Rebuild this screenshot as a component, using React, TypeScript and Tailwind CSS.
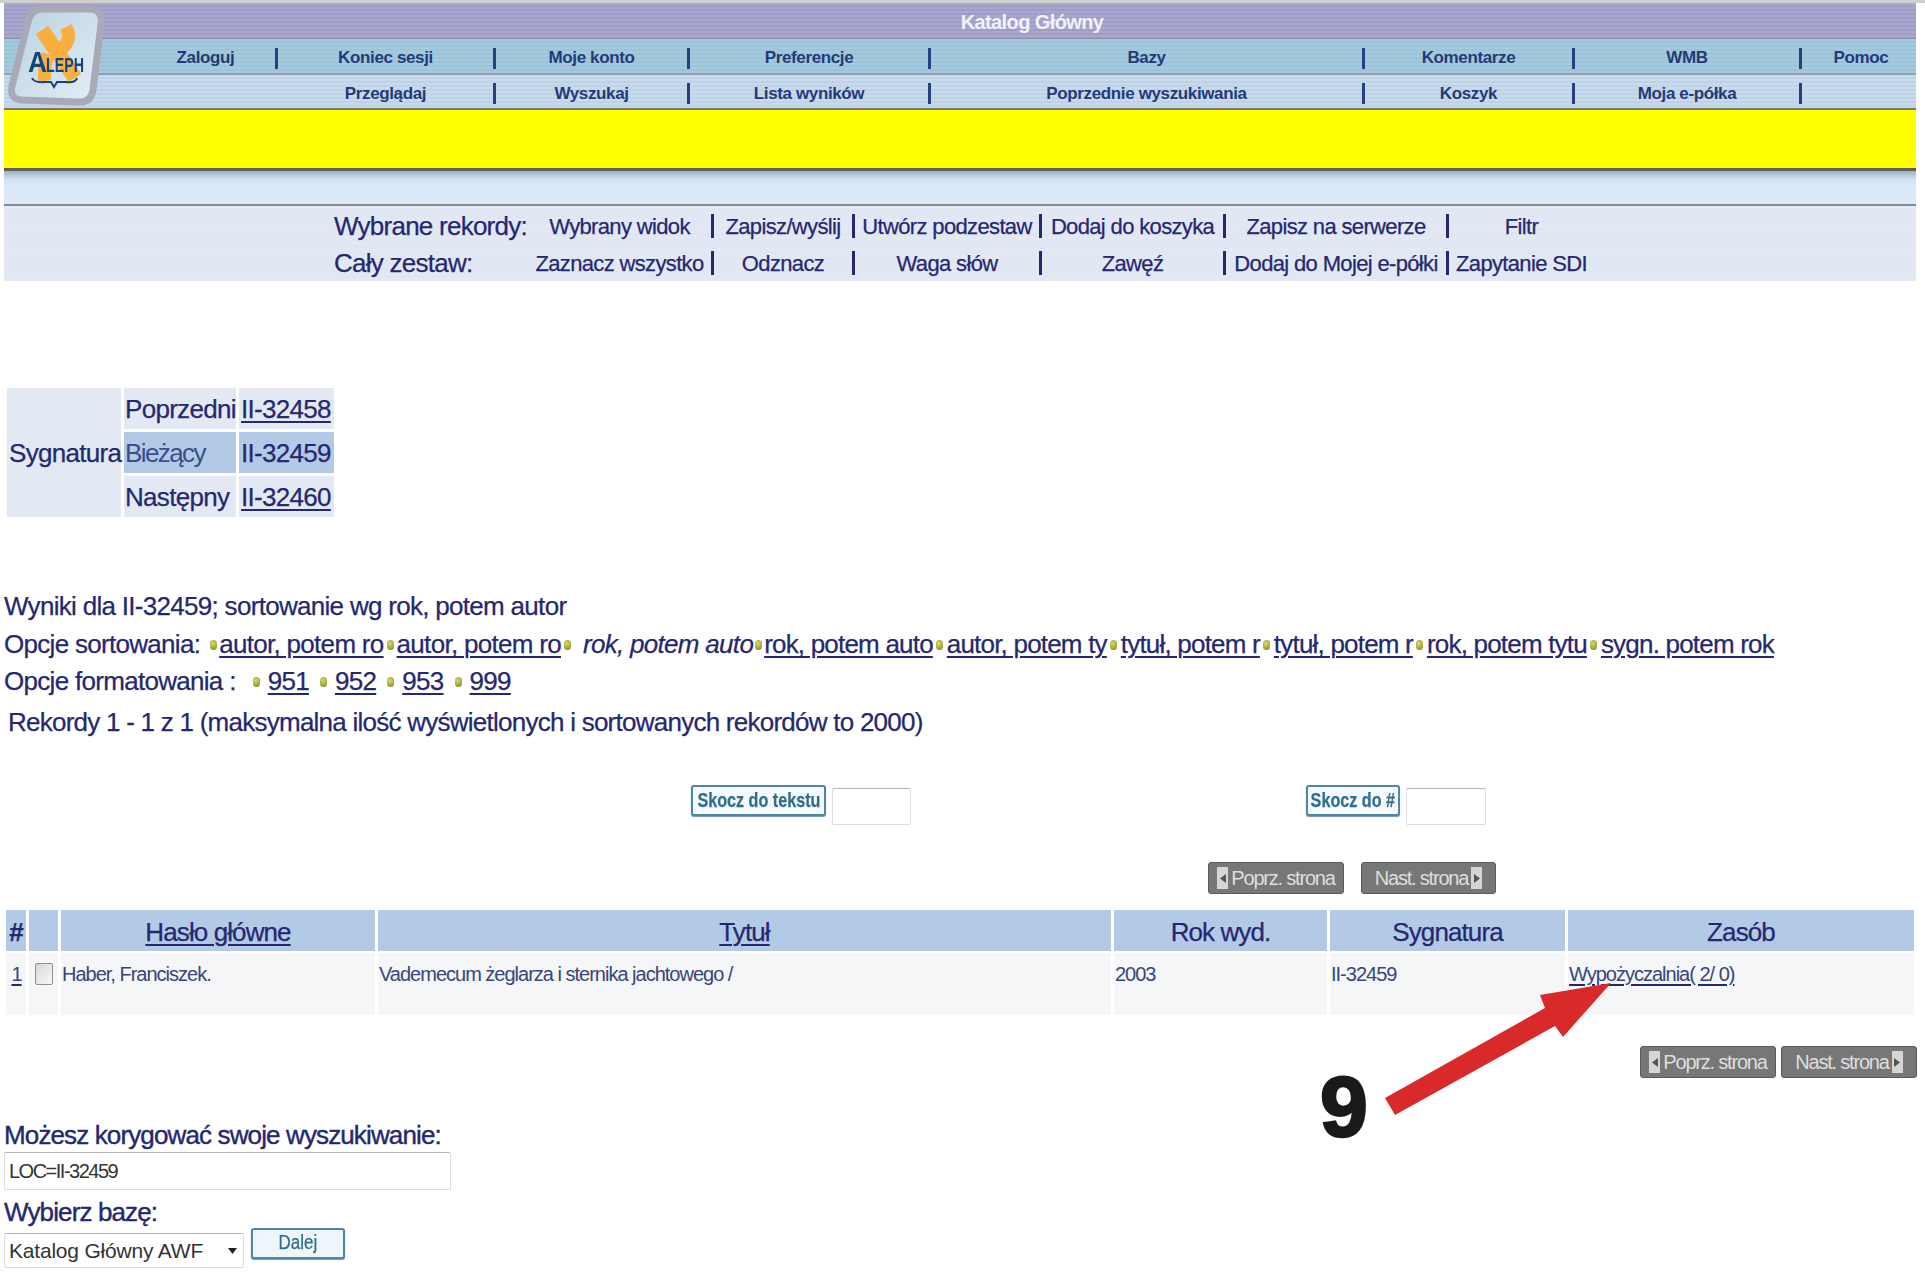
const navTop = ["Zaloguj", "Koniec sesji", "Moje konto", "Preferencje", "Bazy", "Komentarze", "WMB"]
const navBottom = ["", "Przeglądaj", "Wyszukaj", "Lista wyników", "Poprzednie wyszukiwania", "Koszyk", "Moja e-półka"]
const selected = ["Wybrany widok", "Zapisz/wyślij", "Utwórz podzestaw", "Dodaj do koszyka", "Zapisz na serwerze", "Filtr"]
const whole = ["Zaznacz wszystko", "Odznacz", "Waga słów", "Zawęź", "Dodaj do Mojej e-półki", "Zapytanie SDI"]
const sortLinks = ["autor, potem ro", "autor, potem ro"]
const sortLinksAfter = ["rok, potem auto", "autor, potem ty", "tytuł, potem r", "tytuł, potem r", "rok, potem tytu", "sygn. potem rok"]

function Logo() {
  return (
    <svg width="115" height="112" viewBox="0 0 115 112" className="absolute top-0 left-0 blur-[0.5px]">
      <defs>
        <linearGradient id="logoFill" x1="0" y1="0" x2="1" y2="1">
          <stop offset="0" stopColor="#b6d2e2" />
          <stop offset="1" stopColor="#e6eef4" />
        </linearGradient>
      </defs>
      <path
        d="M42 9 L90 9 Q103 10 101 24 L93 90 Q91 103 78 102 L22 100 Q9 99 12 86 L28 22 Q31 9 42 9 Z"
        fill="url(#logoFill)"
        stroke="#a9a9b8"
        strokeWidth="7"
      />
      <g fill="none" stroke="#f9ae40">
        <path d="M42 30 L75 78" strokeWidth="15" />
        <path d="M66 27 Q74 42 57 52" strokeWidth="13" />
        <path d="M48 54 Q43 70 45 81" strokeWidth="13" />
      </g>
      <text x="28" y="72" fontFamily="'Liberation Sans', sans-serif" fontSize="30" fontWeight="700" fill="#16457c" textLength="19" lengthAdjust="spacingAndGlyphs">A</text>
      <text x="46" y="72" fontFamily="'Liberation Sans', sans-serif" fontSize="20" fontWeight="700" fill="#16457c" textLength="38" lengthAdjust="spacingAndGlyphs">LEPH</text>
      <path d="M32 78 Q34 83 45 82 L51 82 L54 87 L57 82 L66 82 Q76 83 77 78" fill="none" stroke="#16457c" strokeWidth="2" />
    </svg>
  )
}

function NavCell({ label, last }: { label: string; last?: boolean }) {
  return (
    <div className={`flex items-center ${last ? "pl-[4px]" : ""}`}>
      <span className="flex-1 text-center text-[17px] font-bold tracking-[-0.37px] whitespace-nowrap text-[#243a78] [-webkit-text-stroke:0]">{label}</span>
      {!last && <span className="h-[21px] w-[3px] bg-[#25407f]" />}
    </div>
  )
}

function ToolCell({ label, sep = true }: { label: string; sep?: boolean }) {
  return (
    <div className="flex items-center">
      <span className="flex-1 text-center text-[22px] tracking-[-0.65px] whitespace-nowrap text-[#25286f]">{label}</span>
      {sep && <span className="h-[24px] w-[3px] bg-[#25286f]" />}
    </div>
  )
}

function Bullet() {
  return <span className="inline-block h-[10px] w-[7px] rounded-full bg-[radial-gradient(circle_at_40%_35%,#d6da6c,#7f8416)]" />
}

function TextLink({ children, className = "" }: { children: React.ReactNode; className?: string }) {
  return <a className={`underline decoration-[#25286f] decoration-[1.5px] underline-offset-[3px] ${className}`}>{children}</a>
}

function JumpButton({ label, width }: { label: string; width: string }) {
  return (
    <button className={`flex h-[31px] items-center justify-center rounded-[3px] border-2 border-[#4f87a3] bg-[#f3f9fd] pb-[2px] text-[21px] font-bold whitespace-nowrap text-[#326d8b] shadow-[0_1px_1px_#6f98ac] ${width}`}>
      <span className="inline-block scale-x-[0.77]">{label}</span>
    </button>
  )
}

function PageButton({ label, dir, width }: { label: string; dir: "prev" | "next"; width: string }) {
  const arrow = (
    <span className="flex h-[22px] w-[11px] shrink-0 items-center justify-center bg-[#d5d5d5]">
      <svg width="6" height="9" viewBox="0 0 6 9">
        <path d={dir === "prev" ? "M6 0 L0 4.5 L6 9 Z" : "M0 0 L6 4.5 L0 9 Z"} fill="#555" />
      </svg>
    </span>
  )
  return (
    <div className={`flex h-[32px] items-center justify-center gap-[3px] rounded-[3px] border border-[#5a5a5a] bg-[#777777] text-[20px] tracking-[-1.2px] whitespace-nowrap text-[#dedede] [-webkit-text-stroke:0] ${width}`}>
      {dir === "prev" && arrow}
      {label}
      {dir === "next" && arrow}
    </div>
  )
}

function SignatureTable() {
  const labelCell = "flex items-center bg-[#e2e9f3] pt-[2px]"
  return (
    <div className="ml-[3px] grid w-[327px] grid-cols-[114px_112px_95px] grid-rows-[41px_41px_41px] gap-x-[3px] gap-y-[3px] text-[26px] tracking-[-0.7px] text-[#25286f]">
      <div className={`${labelCell} row-span-3 pl-[2px] whitespace-nowrap`}>Sygnatura</div>
      <div className={`${labelCell} pl-[1px] whitespace-nowrap`}>Poprzedni</div>
      <div className={`${labelCell} pl-[2px]`}><TextLink>II-32458</TextLink></div>
      <div className="flex items-center bg-[#b3cae7] pt-[2px] pl-[1px] tracking-[-1.6px] text-[#3a4f8a] [-webkit-text-stroke:0]">Bieżący</div>
      <div className="flex items-center bg-[#b3cae7] pt-[2px] pl-[2px]">II-32459</div>
      <div className={`${labelCell} pl-[1px] whitespace-nowrap`}>Następny</div>
      <div className={`${labelCell} pl-[2px]`}><TextLink>II-32460</TextLink></div>
    </div>
  )
}

function ResultsTable() {
  const head = "flex items-center justify-center bg-[#b3cae7] pt-[3px] text-[26px] tracking-[-0.9px] text-[#25286f]"
  const cell = "bg-[#f4f6f8] pt-[9px] pl-[1px] text-[20px] leading-[24px] tracking-[-1px] text-[#3a4578] [-webkit-text-stroke:0]"
  return (
    <div className="mt-[16px] ml-[6px] grid w-[1908px] grid-cols-[20px_29px_314px_733px_213px_235px_346px] grid-rows-[41px_62px] gap-x-[3px] gap-y-[2px]">
      <div className={`${head} font-bold`}>#</div>
      <div className={head} />
      <div className={head}><TextLink>Hasło główne</TextLink></div>
      <div className={head}><TextLink>Tytuł</TextLink></div>
      <div className={head}>Rok wyd.</div>
      <div className={head}>Sygnatura</div>
      <div className={head}>Zasób</div>
      <div className={`${cell} text-center`}><TextLink>1</TextLink></div>
      <div className="bg-[#f4f6f8] pt-[10px] pl-[6px]">
        <div className="h-[22px] w-[18px] rounded-[2px] border border-[#8f8f8f] bg-[linear-gradient(135deg,#d8d8d8,#f8f8f8)]" />
      </div>
      <div className={cell}>Haber, Franciszek.</div>
      <div className={cell}>Vademecum żeglarza i sternika jachtowego /</div>
      <div className={cell}>2003</div>
      <div className={cell}>II-32459</div>
      <div className={cell}><TextLink>Wypożyczalnia( 2/ 0)</TextLink></div>
    </div>
  )
}

export default function App() {
  return (
    <div className="relative h-[1272px] w-[1925px] overflow-hidden bg-white font-['Liberation_Sans',Arial,sans-serif] text-[#25286f] [-webkit-text-stroke:0.25px]">
      <div className="h-[3px] bg-[#cfcfcf]" />
      <div className="mx-[4px] mr-[9px]">
        <div className="flex h-[36px] items-center justify-center border-b border-[#8a8fa8] bg-[repeating-linear-gradient(180deg,#aaa7cf_0_2px,#9f9cc6_2px_4px)] pt-[2px] pl-[144px] text-[20px] font-bold tracking-[-0.6px] text-[#f2f2fa] [-webkit-text-stroke:0]">
          Katalog Główny
        </div>
        <div className="grid h-[36px] grid-cols-[132px_142px_218px_194px_241px_434px_210px_227px_114px] border-b-2 border-[#8fa3ae] bg-[repeating-linear-gradient(180deg,#a6cadd_0_2px,#9dc3d9_2px_4px)] pt-[4px]">
          <div />
          {navTop.map((label) => <NavCell key={label} label={label} />)}
          <NavCell label="Pomoc" last />
        </div>
        <div className="grid h-[33px] grid-cols-[132px_142px_218px_194px_241px_434px_210px_227px_114px] bg-[repeating-linear-gradient(180deg,#c8daec_0_2px,#bfd3e8_2px_4px)] pt-[4px]">
          <div />
          {navBottom.map((label, i) => (i === 0 ? <div key={i} /> : <NavCell key={label} label={label} />))}
          <div />
        </div>
        <div className="h-[60px] border-t-2 border-[#777777] bg-[#ffff00]" />
        <div className="h-[3px] bg-[#5f6350]" />
        <div className="h-[33px] bg-[linear-gradient(180deg,#9db0c9_0,#cfe0f2_8px,#dbe9f9_14px)]" />
        <div className="h-[2px] bg-[#868b90]" />
        <div className="bg-[repeating-linear-gradient(180deg,#e2e9f4_0_3px,#dfe7f3_3px_6px)] pt-[1px]">
          <div className="grid h-[38px] grid-cols-[330px_194px_186px_141px_187px_184px_223px_145px]">
            <div />
            <div className="text-[26px] leading-[38px] tracking-[-0.75px] whitespace-nowrap">Wybrane rekordy:</div>
            {selected.map((label) => <ToolCell key={label} label={label} sep={label !== "Filtr"} />)}
          </div>
          <div className="grid h-[36px] grid-cols-[330px_194px_186px_141px_187px_184px_223px_145px]">
            <div />
            <div className="text-[26px] leading-[36px] tracking-[-0.75px] whitespace-nowrap">Cały zestaw:</div>
            {whole.map((label) => <ToolCell key={label} label={label} sep={label !== "Zapytanie SDI"} />)}
          </div>
        </div>

        <div className="mt-[107px]">
          <SignatureTable />
        </div>

        <div className="mt-[71px] text-[26px] leading-[37px] tracking-[-0.7px] whitespace-nowrap">
          <div>Wyniki dla II-32459; sortowanie wg rok, potem autor</div>
          <div className="mt-[1px] flex items-center">
            <span>Opcje sortowania:</span>
            <span className="mr-[2px] ml-[10px] flex"><Bullet /></span>
            <TextLink>{sortLinks[0]}</TextLink>
            <span className="mx-[3px] flex"><Bullet /></span>
            <TextLink>{sortLinks[1]}</TextLink>
            <span className="mr-[12px] ml-[3px] flex"><Bullet /></span>
            <i>rok, potem auto</i>
            {sortLinksAfter.map((label, i) => (
              <span key={i} className="flex items-center tracking-[-0.8px]">
                <span className={`flex ${i === 0 ? "mx-[2px]" : "mx-[3.5px]"}`}><Bullet /></span>
                <TextLink>{label}</TextLink>
              </span>
            ))}
          </div>
          <div className="flex items-center">
            <span className="mr-[6px]">Opcje formatowania :</span>
            {["951", "952", "953", "999"].map((label) => (
              <span key={label} className="ml-[11px] flex items-center gap-[8px]">
                <Bullet />
                <TextLink>{label}</TextLink>
              </span>
            ))}
          </div>
          <div className="mt-[4px] ml-[4px] tracking-[-0.75px]">Rekordy 1 - 1 z 1 (maksymalna ilość wyświetlonych i sortowanych rekordów to 2000)</div>
        </div>
      </div>

      <div className="mt-[43px] flex h-[42px] items-start pl-[691px]">
        <div className="mt-[1px]"><JumpButton label="Skocz do tekstu" width="w-[135px]" /></div>
        <input className="mt-[4px] ml-[6px] h-[37px] w-[79px] rounded-[2px] border border-[#dddddd] border-t-[#b5b5b5]" />
        <div className="mt-[1px] ml-[395px]"><JumpButton label="Skocz do #" width="w-[94px]" /></div>
        <input className="mt-[4px] ml-[6px] h-[37px] w-[80px] rounded-[2px] border border-[#dddddd] border-t-[#b5b5b5]" />
      </div>

      <div className="mt-[36px] flex gap-[17px] pl-[1208px]">
        <PageButton label="Poprz. strona" dir="prev" width="w-[136px]" />
        <PageButton label="Nast. strona" dir="next" width="w-[135px]" />
      </div>

      <ResultsTable />

      <div className="mt-[31px] flex justify-end gap-[5px] pr-[8px]">
        <PageButton label="Poprz. strona" dir="prev" width="w-[136px]" />
        <PageButton label="Nast. strona" dir="next" width="w-[136px]" />
      </div>

      <div className="mt-[42px] ml-[4px]">
        <div className="h-[32px] text-[26px] leading-[30px] tracking-[-0.87px] text-[#25286f] [-webkit-text-stroke:0.4px]">Możesz korygować swoje wyszukiwanie:</div>
        <div className="flex h-[38px] w-[447px] items-center rounded-[2px] border border-[#dddddd] border-t-[#b5b5b5] pl-[4px] text-[20px] tracking-[-1.5px] text-[#333333] [-webkit-text-stroke:0]">LOC=II-32459</div>
        <div className="mt-[7px] h-[30px] text-[26px] leading-[30px] tracking-[-0.87px] [-webkit-text-stroke:0.4px]">Wybierz bazę:</div>
        <div className="mt-[1px] flex items-start">
          <div className="mt-[5px] flex h-[35px] w-[240px] items-center justify-between rounded-[2px] border border-[#dddddd] border-t-[#b5b5b5] pr-[6px] pl-[4px] text-[21px] tracking-[-0.2px] text-[#333333] [-webkit-text-stroke:0]">
            Katalog Główny AWF
            <svg width="9" height="6" viewBox="0 0 9 6"><path d="M0 0 H9 L4.5 6 Z" fill="#222" /></svg>
          </div>
          <button className="ml-[7px] flex h-[31px] w-[94px] items-center justify-center rounded-[3px] border-2 border-[#4f87a3] bg-[#eef6fb] pb-[4px] text-[20px] text-[#326d8b] shadow-[0_1px_1px_#6f98ac]">
            <span className="inline-block scale-x-[0.85]">Dalej</span>
          </button>
        </div>
      </div>

      <Logo />
      <svg width="240" height="145" viewBox="0 0 240 145" className="absolute top-[975px] left-[1380px]">
        <polygon points="5,123 15,140 175,51 183,62 231,8 160,20 165,33" fill="#d82a2a" />
      </svg>
      <span className="absolute top-[1061px] left-[1320px] text-[86px] leading-[90px] font-bold text-[#1a1a18] [-webkit-text-stroke:2.5px_#1a1a18]">9</span>
    </div>
  )
}
